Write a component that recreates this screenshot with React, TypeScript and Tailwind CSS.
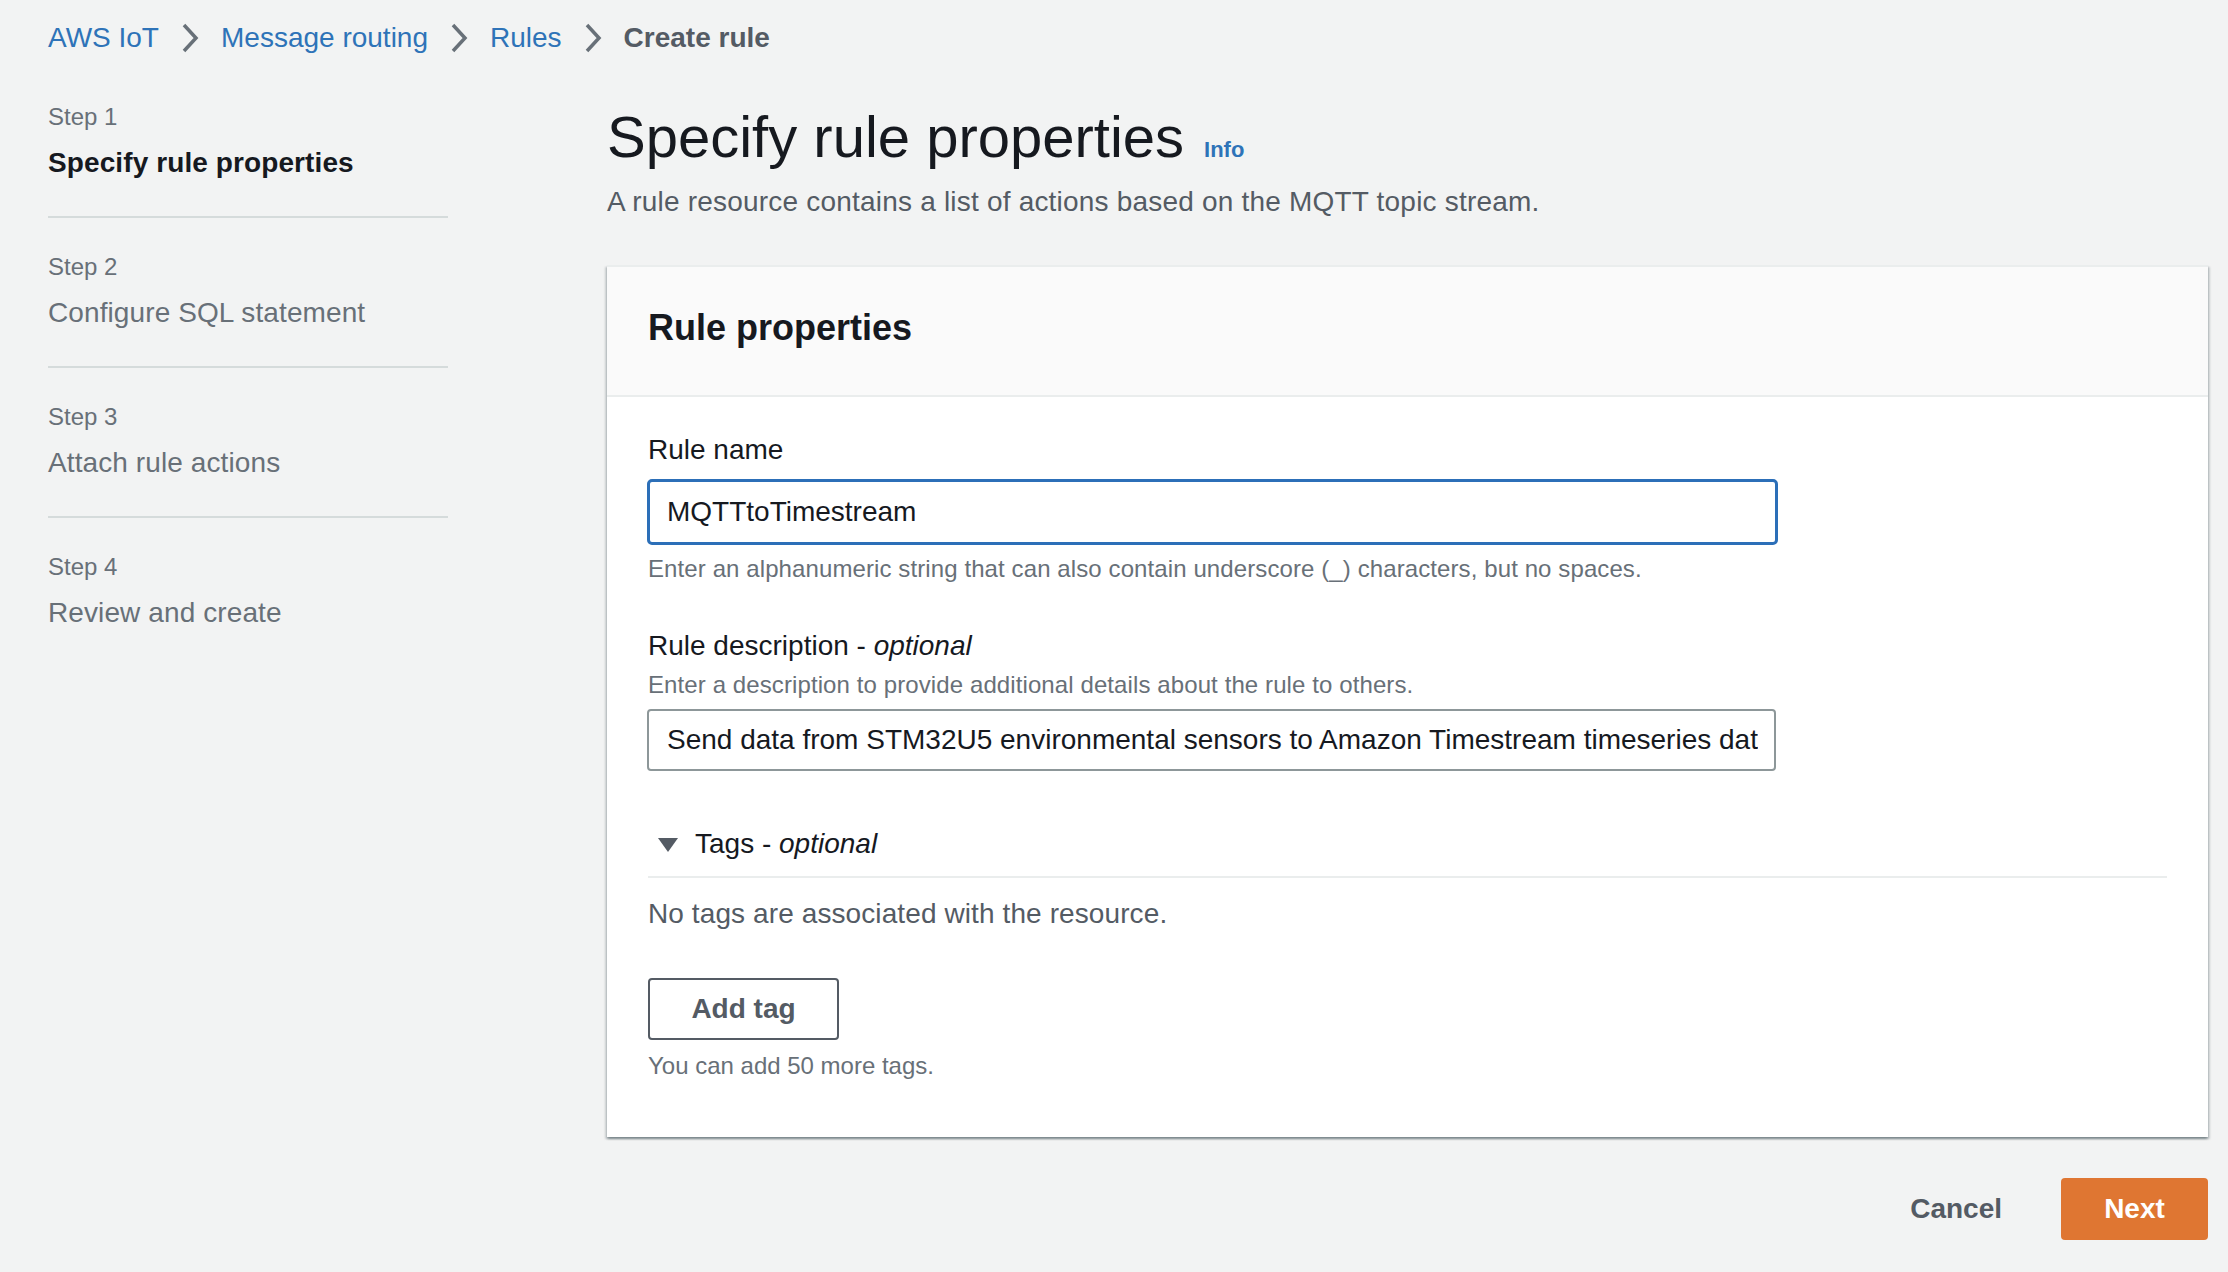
import React from 'react';

const font = { fontFamily: '"Liberation Sans", Arial, sans-serif' };

function Chevron() {
  return (
    <svg width="18" height="30" viewBox="0 0 18 30" className="mx-[22px] shrink-0" aria-hidden>
      <path d="M3 2 L15 15 L3 28" fill="none" stroke="#687078" strokeWidth="3.5" />
    </svg>
  );
}

const steps = [
  { label: 'Step 1', title: 'Specify rule properties', active: true },
  { label: 'Step 2', title: 'Configure SQL statement' },
  { label: 'Step 3', title: 'Attach rule actions' },
  { label: 'Step 4', title: 'Review and create' },
];

function Breadcrumbs() {
  return (
    <nav className="flex items-center pl-[48px] pt-[18px] h-[58px] text-[28px] leading-[40px]">
      <a className="text-[#2e73b8]">AWS IoT</a>
      <Chevron />
      <a className="text-[#2e73b8]">Message routing</a>
      <Chevron />
      <a className="text-[#2e73b8]">Rules</a>
      <Chevron />
      <span className="font-bold text-[#545b64]">Create rule</span>
    </nav>
  );
}

function StepNav() {
  return (
    <ul className="w-[400px] shrink-0 pt-[43px]">
      {steps.map((s, i) => (
        <li
          key={s.label}
          className={`${i === 0 ? 'pt-0' : 'pt-[33px]'} pb-[33px] ${i < steps.length - 1 ? 'border-b-2 border-[#d5dbdb]' : ''}`}
        >
          <div className="text-[24px] leading-[32px] text-[#687078]">{s.label}</div>
          <div
            className={`mt-[10px] text-[28px] leading-[40px] tracking-[0.1px] ${s.active ? 'font-bold text-[#16191f]' : 'text-[#687078]'}`}
          >
            {s.title}
          </div>
        </li>
      ))}
    </ul>
  );
}

function RulePropertiesCard() {
  return (
    <div className="bg-white border-t-2 border-[#eaeded] shadow-[0_2px_2px_0_rgba(0,28,36,0.3),2px_2px_2px_0_rgba(0,28,36,0.15),-2px_2px_2px_0_rgba(0,28,36,0.15)]">
      <div className="h-[130px] bg-[#fafafa] border-b-2 border-[#eaeded] px-[41px] pt-[39px]">
        <h2 className="text-[36px] leading-[44px] font-bold text-[#16191f]">Rule properties</h2>
      </div>
      <div className="px-[41px] pt-[33px] pb-[55px]">
        <label className="block text-[28px] leading-[40px] text-[#16191f]">Rule name</label>
        <input
          readOnly
          value="MQTTtoTimestream"
          className="mt-[9px] -ml-px block w-[1131px] h-[66px] rounded-[5px] border-[3px] border-[#2c6fb8] bg-white pl-[17px] text-[28px] text-[#16191f] outline-none"
          style={font}
        />
        <p className="mt-[8px] text-[24px] leading-[32px] tracking-[0.1px] text-[#687078]">
          Enter an alphanumeric string that can also contain underscore (_) characters, but no spaces.
        </p>

        <label className="mt-[41px] block text-[28px] leading-[40px] text-[#16191f]">
          Rule description - <i>optional</i>
        </label>
        <p className="mt-[3px] text-[24px] leading-[32px] tracking-[0.1px] text-[#687078]">
          Enter a description to provide additional details about the rule to others.
        </p>
        <input
          readOnly
          value="Send data from STM32U5 environmental sensors to Amazon Timestream timeseries database"
          className="mt-[8px] -ml-px block w-[1129px] h-[62px] rounded-[4px] border-2 border-[#8d9799] bg-white pl-[18px] pr-[16px] text-[28px] text-[#16191f] outline-none"
          style={font}
        />

        <div className="mt-[53px] flex items-center h-[40px] text-[28px] leading-[40px] text-[#16191f]">
          <svg width="22" height="16" viewBox="0 0 22 16" className="ml-[9px] mr-[16px] mt-[2px]" aria-hidden>
            <path d="M1 1 H21 L11 15 Z" fill="#545b64" />
          </svg>
          <span>
            Tags - <i>optional</i>
          </span>
        </div>
        <div className="mt-[12px] h-[2px] bg-[#eaeded]" />
        <p className="mt-[16px] text-[28px] leading-[40px] tracking-[0.1px] text-[#545b64]">
          No tags are associated with the resource.
        </p>
        <button
          className="mt-[44px] block h-[62px] w-[191px] rounded-[4px] border-2 border-[#545b64] bg-white text-[28px] font-bold text-[#545b64]"
          style={font}
        >
          Add tag
        </button>
        <p className="mt-[10px] text-[24px] leading-[32px] text-[#687078]">You can add 50 more tags.</p>
      </div>
    </div>
  );
}

export default function App() {
  return (
    <div className="min-h-[1272px] w-full bg-[#f2f3f3]" style={font}>
      <Breadcrumbs />
      <div className="flex pl-[48px] pr-[20px]">
        <StepNav />
        <main className="ml-[159px] flex-1 pt-[47px]">
          <div className="flex items-baseline">
            <h1 className="text-[58px] leading-[64px] font-normal text-[#16191f]">Specify rule properties</h1>
            <a className="ml-[20px] text-[22px] font-bold text-[#2e73b8]">Info</a>
          </div>
          <p className="mt-[13px] text-[28px] leading-[40px] tracking-[0.2px] text-[#545b64]">
            A rule resource contains a list of actions based on the MQTT topic stream.
          </p>
          <div className="mt-[43px]">
            <RulePropertiesCard />
          </div>
          <div className="mt-[41px] flex justify-end items-center gap-[19px]">
            <button className="h-[62px] px-[40px] text-[28px] font-bold text-[#545b64]" style={font}>
              Cancel
            </button>
            <button
              className="h-[62px] w-[147px] rounded-[4px] bg-[#df7632] text-[28px] font-bold text-white"
              style={font}
            >
              Next
            </button>
          </div>
        </main>
      </div>
    </div>
  );
}
